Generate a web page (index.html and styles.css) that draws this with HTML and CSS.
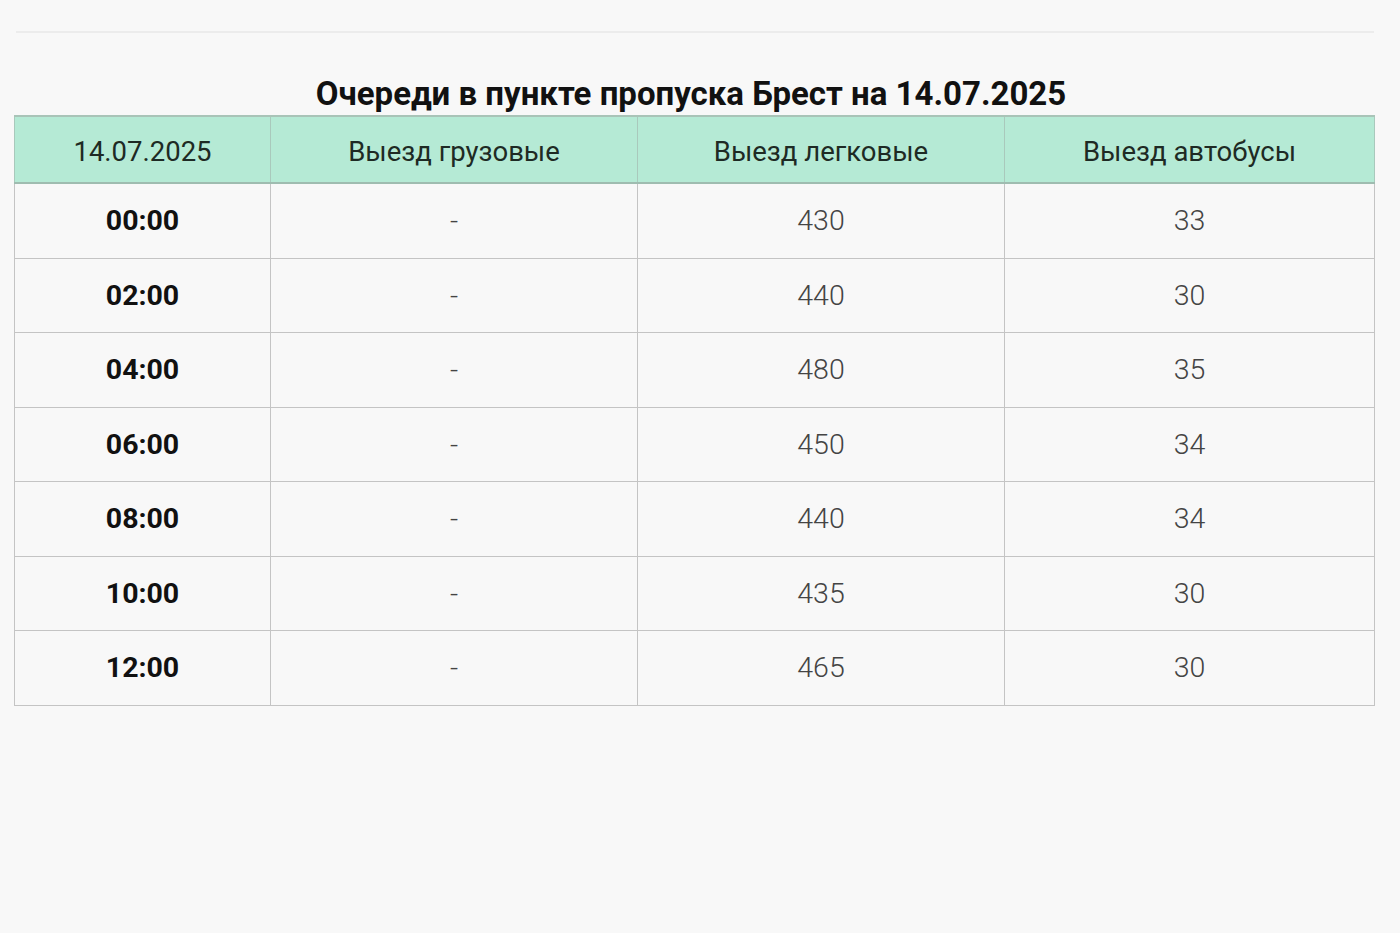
FILE: index.html
```html
<!DOCTYPE html>
<html lang="ru">
<head>
<meta charset="utf-8">
<title>Очереди в пункте пропуска Брест</title>
<link rel="stylesheet" href="styles.css">
</head>
<body>
<div class="page">
  <hr class="sep">
  <h2 class="title">Очереди в пункте пропуска Брест на 14.07.2025</h2>
  <table class="queue">
    <colgroup>
      <col class="c1"><col class="c2"><col class="c3"><col class="c4">
    </colgroup>
    <thead>
      <tr><th>14.07.2025</th><th>Выезд грузовые</th><th>Выезд легковые</th><th>Выезд автобусы</th></tr>
    </thead>
    <tbody>
      <tr><td class="time">00:00</td><td>-</td><td>430</td><td>33</td></tr>
      <tr><td class="time">02:00</td><td>-</td><td>440</td><td>30</td></tr>
      <tr><td class="time">04:00</td><td>-</td><td>480</td><td>35</td></tr>
      <tr><td class="time">06:00</td><td>-</td><td>450</td><td>34</td></tr>
      <tr><td class="time">08:00</td><td>-</td><td>440</td><td>34</td></tr>
      <tr><td class="time">10:00</td><td>-</td><td>435</td><td>30</td></tr>
      <tr><td class="time">12:00</td><td>-</td><td>465</td><td>30</td></tr>
    </tbody>
  </table>
</div>
</body>
</html>
```

FILE: styles.css
```css
html, body {
  margin: 0;
  padding: 0;
  background: #f8f8f8;
  font-family: Roboto, "Liberation Sans", sans-serif;
}
.page {
  padding: 31px 26px 0 14px;
}
.sep {
  margin: 0 0 0 2px;
  border: 0;
  height: 2px;
  background: #ececec;
}
.title {
  margin: 41px 0 0 0;
  text-align: center;
  font-size: 33px;
  font-weight: 700;
  line-height: 40px;
  color: #111;
  padding-right: 6px;
}
.queue {
  width: 1360px;
  border-collapse: collapse;
  table-layout: fixed;
  margin-top: 1px;
}
.c1 { width: 256px; }
.c2 { width: 367px; }
.c3 { width: 367px; }
.c4 { width: 370px; }
.queue th, .queue td {
  border: 1px solid #c4c4c4;
  text-align: center;
  padding: 0;
}
.queue th {
  background: #b5ead5;
  height: 62px;
  padding-top: 3px;
  font-size: 27.5px;
  font-weight: 400;
  color: #1e2a24;
  border-color: #a9c9bc;
  border-bottom: 2px solid #9fbcb0;
  border-top: 2px solid #a9c4b8;
}
.queue td {
  height: 73.5px;
  font-size: 28.5px;
  font-weight: 300;
  color: #444;
}
.queue td.time {
  font-weight: 700;
  color: #111;
}
```
